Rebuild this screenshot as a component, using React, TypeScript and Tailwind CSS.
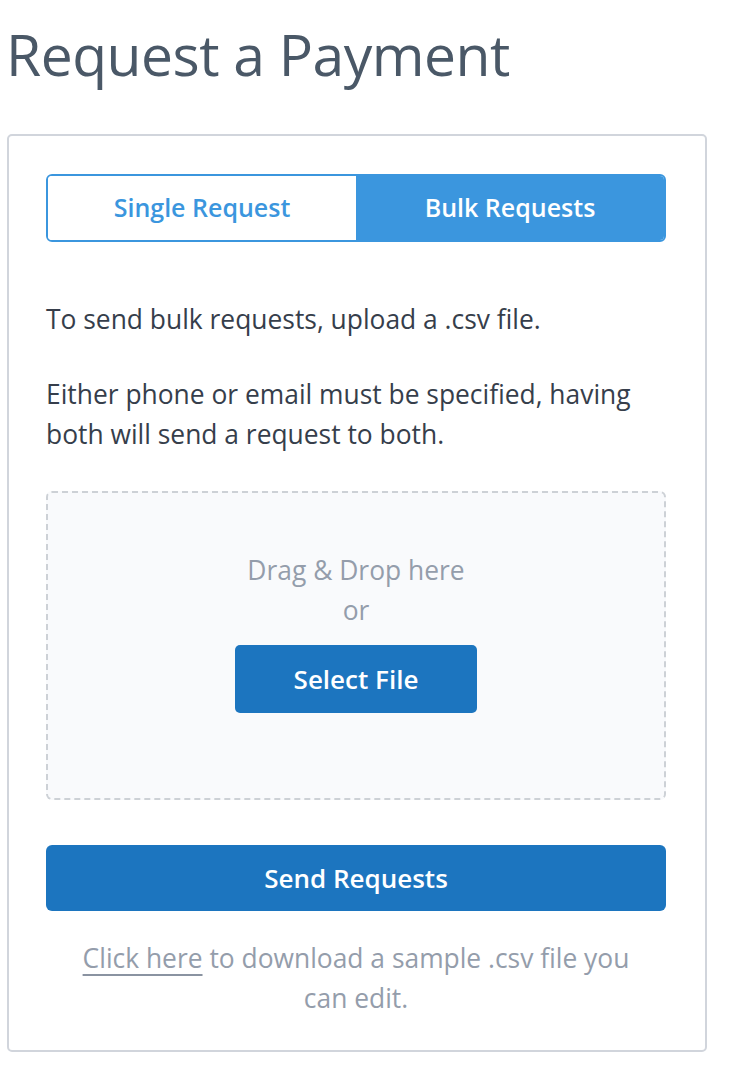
import React from "react";

const font = { fontFamily: '"Open Sans", "Liberation Sans", sans-serif' };

const App = () => {
  return (
    <div className="w-[752px] min-h-[1090px] bg-white pt-[18px]" style={font}>
      <h1 className="ml-[6px] text-[57px] leading-[72px] font-normal text-[#4a5867] tracking-[-0.5px]">
        Request a Payment
      </h1>
      <div className="ml-[7px] mt-[44px] w-[700px] rounded-[5px] border-2 border-[#d1d5dc] pl-[37px] pr-[39px] pt-[38px] pb-[32px]">
        <div className="flex h-[68px] overflow-hidden rounded-[6px] border-2 border-[#3b96de]">
          <button className="flex-1 bg-white text-[25px] font-semibold text-[#3b96de]">
            Single Request
          </button>
          <button className="flex-1 bg-[#3b96de] text-[25px] font-semibold text-white">
            Bulk Requests
          </button>
        </div>

        <p className="mt-[57px] text-[26.4px] leading-[40px] text-[#363e4b]">
          To send bulk requests, upload a .csv file.
        </p>
        <p className="mt-[35px] text-[26.4px] leading-[40px] text-[#363e4b]">
          Either phone or email must be specified, having both will send a
          request to both.
        </p>

        <div className="mt-[37px] flex h-[309px] flex-col items-center rounded-[6px] border-2 border-dashed border-[#cdd1d6] bg-[#f9fafc] pt-[57px]">
          <p className="text-center text-[26.4px] leading-[40px] text-[#949dab]">
            Drag &amp; Drop here
            <br />
            or
          </p>
          <button className="mt-[15px] h-[68px] w-[242px] rounded-[5px] bg-[#1c75bf] text-[26px] font-semibold text-white">
            Select File
          </button>
        </div>

        <button className="mt-[45px] h-[66px] w-full rounded-[6px] bg-[#1c75bf] text-[26px] font-semibold text-white">
          Send Requests
        </button>

        <p className="mx-auto mt-[27px] w-[570px] text-center text-[26.4px] leading-[40px] text-[#949dab]">
          <a className="underline decoration-2 underline-offset-[6px] decoration-[#8a93a1]">Click here</a>{" "}
          to download a sample .csv file you can edit.
        </p>
      </div>
    </div>
  );
};

export default App;
